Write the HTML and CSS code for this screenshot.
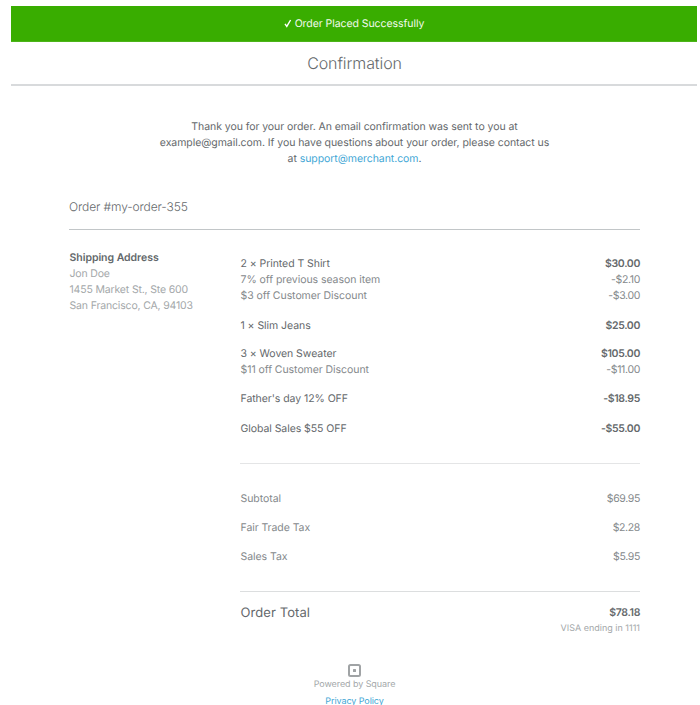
FILE: index.html
```
<!DOCTYPE html>
<html lang="en">
<head>
<meta charset="utf-8">
<title>Order Confirmation</title>
<link rel="stylesheet" href="styles.css">
</head>
<body>
<div class="page">
  <div class="banner"><svg class="check" viewBox="0 0 8 9"><path d="M1 4.8 L2.8 7.4 L6.6 1"/></svg><span>Order Placed Successfully</span></div>
  <h1 class="title"><span>Confirmation</span></h1>
  <p class="thanks">Thank you for your order. An email confirmation was sent to you at<br>example@gmail.com. If you have questions about your order, please contact us<br>at <a href="#">support@merchant.com</a>.</p>
  <main class="order">
    <h2 class="order-name"><span>Order #my-order-355</span></h2>
    <div class="columns">
      <address class="address"><strong>Shipping Address</strong><span>Jon Doe</span><span>1455 Market St., Ste 600</span><span>San Francisco, CA, 94103</span></address>
      <section class="summary">
        <div class="items">
          <div class="item first">
            <div class="row"><span>2 × Printed T Shirt</span><b>$30.00</b></div>
            <div class="row sub"><span>7% off previous season item</span><span>-$2.10</span></div>
            <div class="row sub"><span>$3 off Customer Discount</span><span>-$3.00</span></div>
          </div>
          <div class="item"><div class="row"><span>1 × Slim Jeans</span><b>$25.00</b></div></div>
          <div class="item">
            <div class="row"><span>3 × Woven Sweater</span><b>$105.00</b></div>
            <div class="row sub"><span>$11 off Customer Discount</span><span>-$11.00</span></div>
          </div>
          <div class="item discount"><div class="row"><span>Father's day 12% OFF</span><b>-$18.95</b></div></div>
          <div class="item"><div class="row"><span>Global Sales $55 OFF</span><b>-$55.00</b></div></div>
        </div>
        <div class="taxes">
          <div class="row sub"><span>Subtotal</span><span>$69.95</span></div>
          <div class="row sub"><span>Fair Trade Tax</span><span>$2.28</span></div>
          <div class="row sub"><span>Sales Tax</span><span>$5.95</span></div>
        </div>
        <div class="row total"><span class="total-label">Order Total</span><b>$78.18</b></div>
        <div class="card"><span>VISA ending in 1111</span></div>
      </section>
    </div>
  </main>
  <footer class="footer">
    <svg class="logo" viewBox="0 0 13 13"><rect x="1" y="1" width="11" height="11" rx="1.5"/><rect class="dot" x="5" y="5" width="3" height="3" rx=".5"/></svg>
    <span class="powered">Powered by Square</span>
    <a href="#">Privacy Policy</a>
  </footer>
</div>
</body>
</html>
```
FILE: styles.css
```
* { box-sizing: border-box; }
body { margin: 0; height: 705px; overflow: hidden; background: #fff; color: #65696c; font: 10.5px/16px Inter, "Liberation Sans", sans-serif; letter-spacing: -0.06px; font-feature-settings: "calt" 0; text-rendering: geometricPrecision; }
a { color: #43a7d6; text-decoration: none; }
b, strong { font-weight: 600; }
.page { width: 686px; margin-left: 11px; padding-top: 6px; }
.banner { height: 36px; display: flex; align-items: center; justify-content: center; gap: 3px; padding-top: 1px; background: #39ad00; border-bottom: 1px solid #4cb41a; color: #f2faee; }
.check { width: 8px; height: 9px; margin-bottom: 1px; fill: none; stroke: #fff; stroke-width: 1.4; }
.title { margin: 0; height: 44px; padding-left: 1px; border-bottom: 2px solid #d8dadc; text-align: center; font-size: 16px; line-height: 43px; font-weight: 300; letter-spacing: -0.1px; }
.thanks { margin: 33px 0 0; padding-left: 1px; text-align: center; }
.order { width: 571px; margin: 32px 0 0 58px; }
.order-name { margin: 0; height: 31px; border-bottom: 1px solid #c2c6c8; font-size: 12px; line-height: 16px; font-weight: 350; letter-spacing: -0.1px; }
.columns { display: grid; grid-template-columns: 171px 400px; }
.address { padding: 20px 0 0 0.5px; display: flex; flex-direction: column; align-items: flex-start; font-style: normal; color: #a4a8aa; letter-spacing: -0.16px; }
.address strong { color: #62676a; letter-spacing: -0.04px; }
.row { display: flex; justify-content: space-between; padding-left: 0.5px; }
.row > :last-child { letter-spacing: -0.35px; }
.row > b { letter-spacing: -0.48px; }
.sub { color: #85898c; }
.items { height: 234px; padding-top: 26px; border-bottom: 1px solid #e4e5e6; }
.item { margin-bottom: 13px; }
.item.first, .item.discount { margin-bottom: 14px; }
.item:nth-child(2) { margin-bottom: 12px; }
.taxes { height: 128px; padding-top: 27px; display: flex; flex-direction: column; gap: 13px; border-bottom: 1px solid #dcdedf; }
.total { padding-top: 13px; }
.total-label { font-size: 13px; letter-spacing: 0.08px; }
.card { text-align: right; font-size: 9px; color: #a4a8aa; letter-spacing: 0; }
.footer { margin-top: 27px; padding-left: 1px; display: flex; flex-direction: column; align-items: center; font-size: 9px; letter-spacing: -0.08px; }
.footer a { line-height: 17px; }
.logo { width: 13px; height: 13px; fill: none; stroke: #a0a3a5; stroke-width: 2; }
.logo .dot { fill: #a0a3a5; stroke: none; }
.powered { color: #a4a8aa; }
```
